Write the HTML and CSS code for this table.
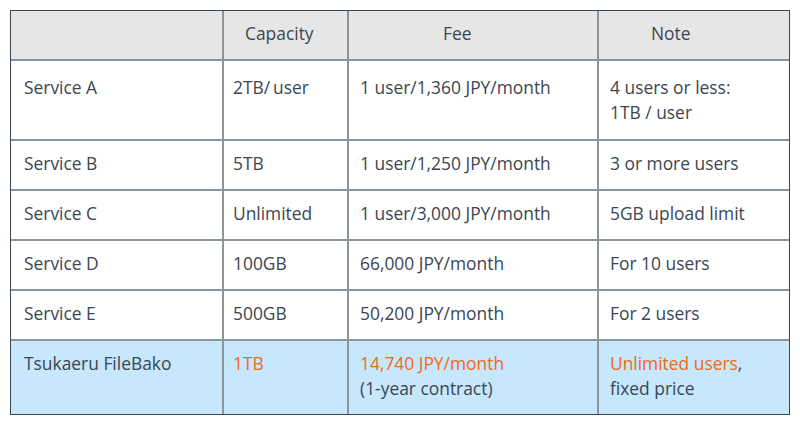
FILE: index.html
```html
<!DOCTYPE html>
<html>
<head>
<meta charset="utf-8">
<link rel="stylesheet" href="styles.css">
</head>
<body>
<table class="plans">
  <colgroup>
    <col class="w1"><col class="w2"><col class="w3"><col class="w4">
  </colgroup>
  <tr class="head">
    <th class="c1"></th>
    <th class="c2 h2">Capacity</th>
    <th class="c3 h3">Fee</th>
    <th class="c4 h4">Note</th>
  </tr>
  <tr class="row tall">
    <td class="c1">Service A</td>
    <td class="c2">2TB/&thinsp;user</td>
    <td class="c3">1 user/1,360 JPY/month</td>
    <td class="c4">4 users or less:<br>1TB / user</td>
  </tr>
  <tr class="row">
    <td class="c1">Service B</td>
    <td class="c2">5TB</td>
    <td class="c3">1 user/1,250 JPY/month</td>
    <td class="c4">3 or more users</td>
  </tr>
  <tr class="row">
    <td class="c1">Service C</td>
    <td class="c2">Unlimited</td>
    <td class="c3">1 user/3,000 JPY/month</td>
    <td class="c4">5GB upload limit</td>
  </tr>
  <tr class="row">
    <td class="c1">Service D</td>
    <td class="c2">100GB</td>
    <td class="c3">66,000 JPY/month</td>
    <td class="c4">For 10 users</td>
  </tr>
  <tr class="row">
    <td class="c1">Service E</td>
    <td class="c2">500GB</td>
    <td class="c3">50,200 JPY/month</td>
    <td class="c4">For 2 users</td>
  </tr>
  <tr class="row ours">
    <td class="c1">Tsukaeru FileBako</td>
    <td class="c2"><span class="hl">1TB</span></td>
    <td class="c3"><span class="hl">14,740 JPY/month</span><br>(1-year contract)</td>
    <td class="c4"><span class="hl">Unlimited users</span>,<br>fixed price</td>
  </tr>
</table>
</body>
</html>
```
FILE: styles.css
```css
html, body {
  margin: 0;
  padding: 0;
  background: #ffffff;
}
body {
  padding: 10px;
  font-family: "Open Sans", "Noto Sans", sans-serif;
  font-size: 17.4px;
  color: #3b4652;
}
.plans {
  border-collapse: separate;
  border-spacing: 0;
  border: 1px solid #3b4652;
  width: 780px;
  table-layout: fixed;
}
.w1 { width: 213px; }
.w2 { width: 125px; }
.w3 { width: 250px; }
.w4 { width: 190px; }
.plans th, .plans td {
  box-sizing: border-box;
  padding: 10px 0 0 0;
  line-height: 25px;
  vertical-align: top;
  text-align: left;
  font-weight: normal;
  border-right: 2px solid #8c959d;
  border-bottom: 2px solid #8c959d;
  white-space: nowrap;
}
.plans tr > :last-child { border-right: none; }
.plans tr:last-child > * { border-bottom: none; }
.head th {
  background: #e6e6e6;
  height: 50px;
}
.row td { height: 50px; }
.row.tall td { height: 80px; padding-top: 14px; }
.row.ours td {
  height: 73px;
  background: #c6e7fc;
}
.plans .c1 { padding-left: 13px; }
.plans .c2 { padding-left: 9px; }
.plans .c3 { padding-left: 11px; }
.plans .c4 { padding-left: 11px; }
.plans .h2 { padding-left: 21px; }
.plans .h3 { padding-left: 94px; }
.plans .h4 { padding-left: 52px; }
.hl { color: #f26a14; }
```
